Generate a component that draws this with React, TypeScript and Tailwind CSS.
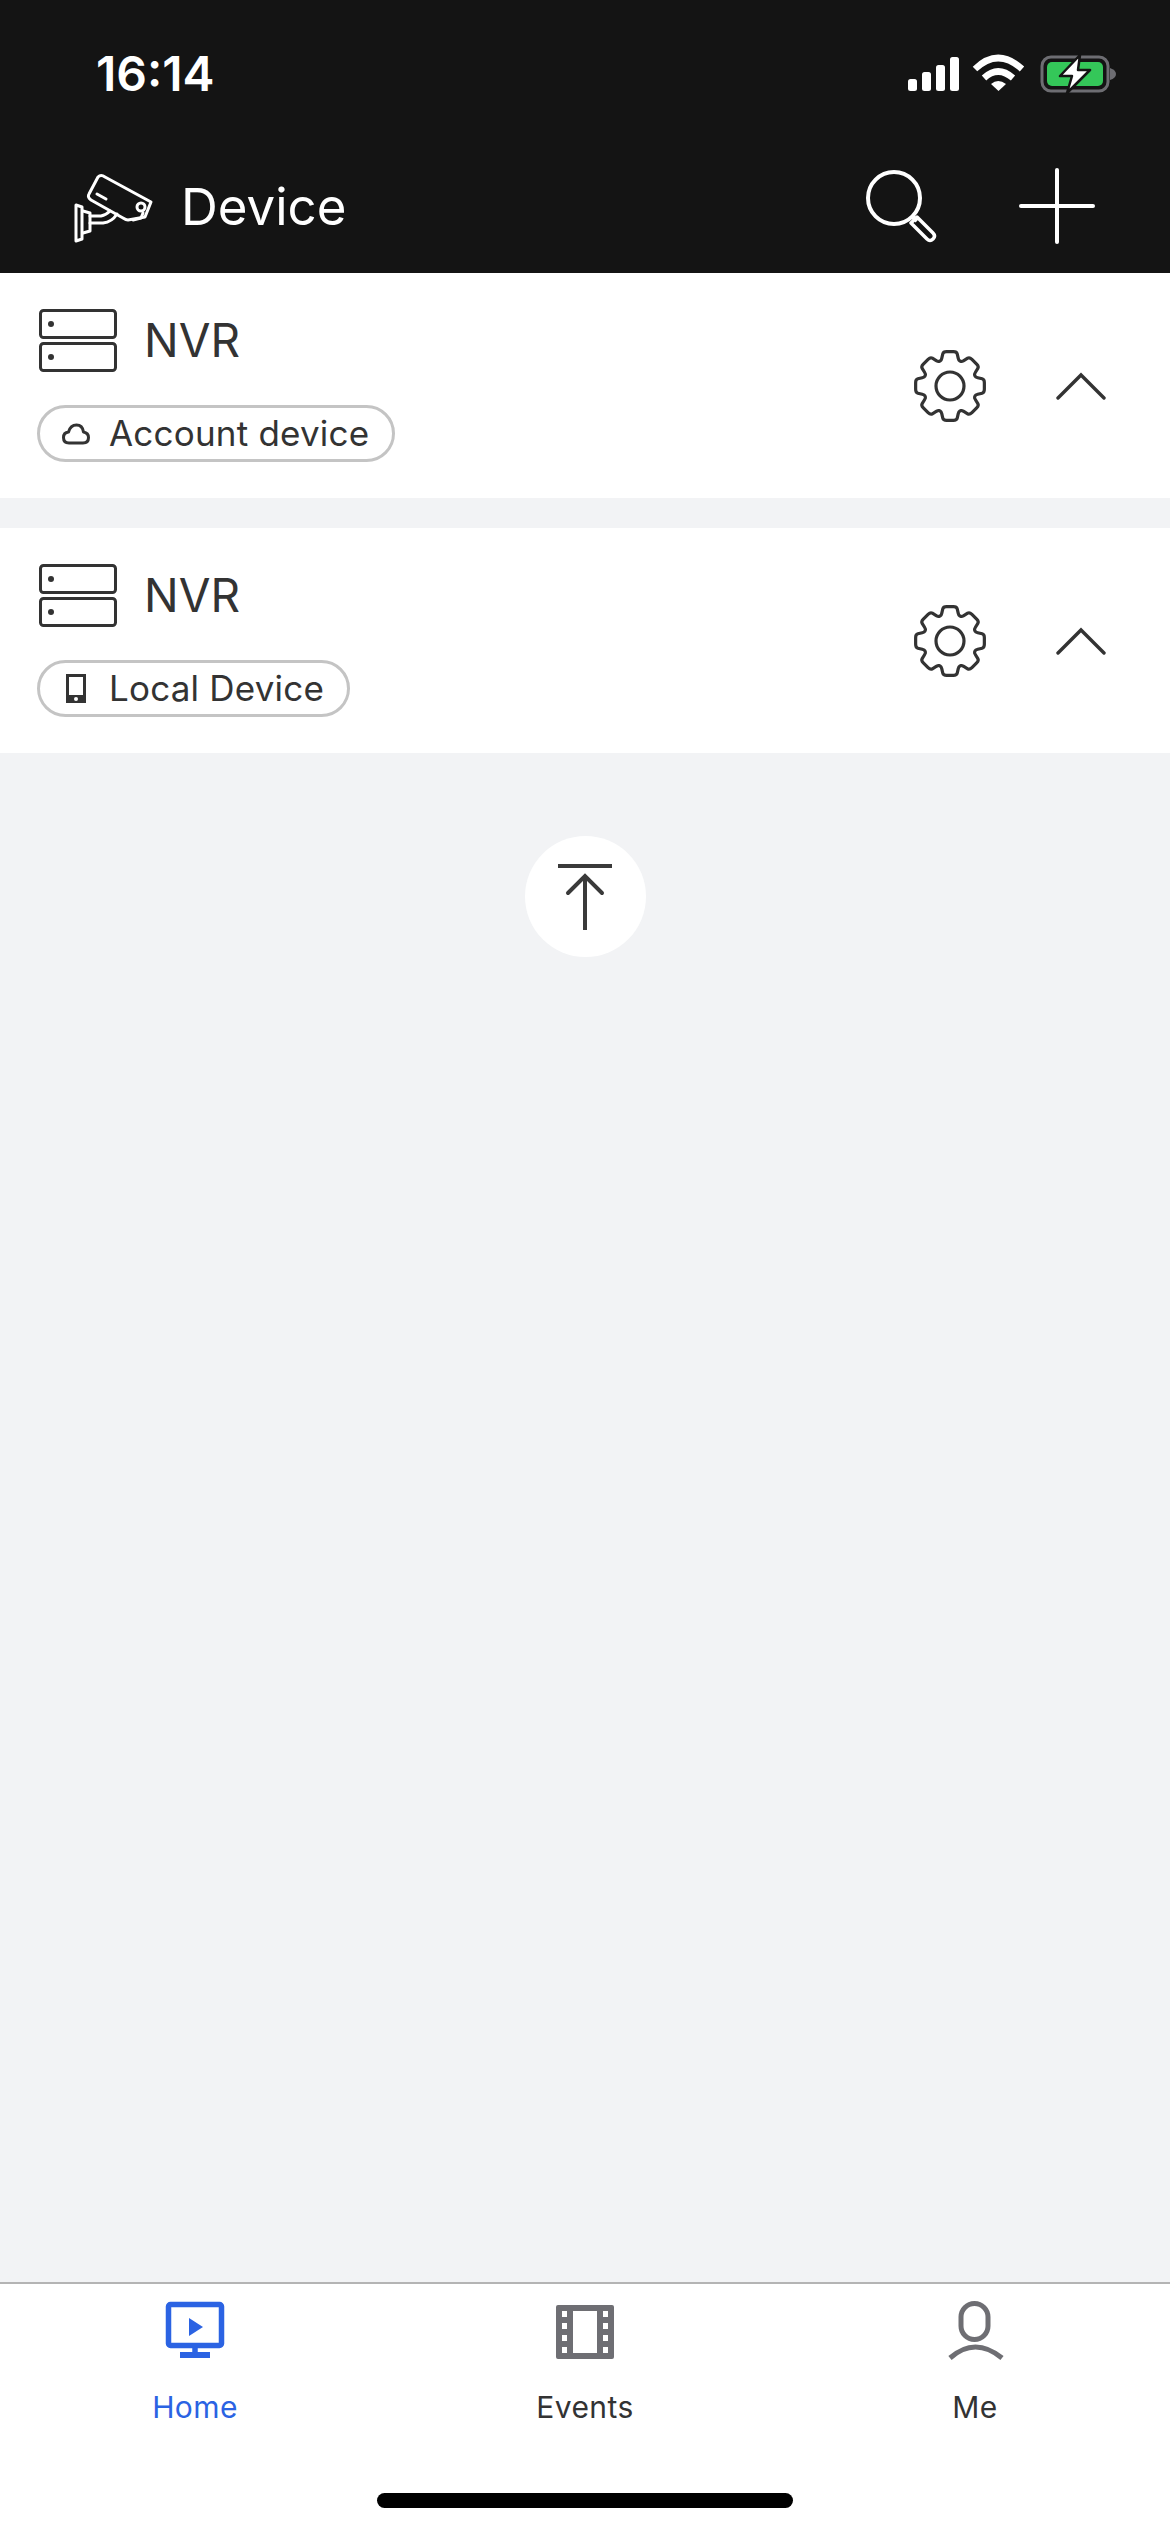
const gearPath = (() => {
  const pts: [number, number][] = [];
  for (let i = 0; i < 8; i++) {
    const a = (i * Math.PI) / 4 - Math.PI / 2;
    const d = Math.PI / 180;
    [[27, -19], [35, -11], [35, 11], [27, 19]].forEach(([r, o]) => {
      pts.push([40 + r * Math.cos(a + o * d), 40 + r * Math.sin(a + o * d)]);
    });
  }
  const mix = (p: number[], q: number[], t: number) => `${(p[0] + (q[0] - p[0]) * t).toFixed(2)} ${(p[1] + (q[1] - p[1]) * t).toFixed(2)}`;
  let d = "";
  pts.forEach((p, i) => {
    const prev = pts[(i + pts.length - 1) % pts.length];
    const next = pts[(i + 1) % pts.length];
    d += `${i === 0 ? "M" : "L"}${mix(p, prev, 0.25)} Q${p[0].toFixed(2)} ${p[1].toFixed(2)} ${mix(p, next, 0.25)} `;
  });
  return d + "Z";
})();

function StatusIcons() {
  return (
    <svg width="210" height="40" viewBox="0 0 210 40" fill="none">
      <rect x="0" y="25" width="9" height="12" rx="2.5" fill="#fff" />
      <rect x="14" y="18" width="9" height="19" rx="2.5" fill="#fff" />
      <rect x="28" y="11" width="9" height="26" rx="2.5" fill="#fff" />
      <rect x="42" y="3" width="9" height="34" rx="2.5" fill="#fff" />
      <path d="M67 15 Q90 -7 114 15" stroke="#fff" strokeWidth="6.5" />
      <path d="M76 24 Q90 11 105 24" stroke="#fff" strokeWidth="6.5" />
      <path d="M83 30 Q90 24 98 30 L90.5 37 Z" fill="#fff" />
      <rect x="134" y="3" width="66" height="34" rx="9" stroke="#6d6d72" strokeWidth="3" />
      <rect x="139" y="8" width="56" height="24" rx="5" fill="#34c759" />
      <path d="M202 14 Q208 16 208 20 Q208 24 202 26 Z" fill="#6d6d72" />
      <path d="M172 1 L152 22 L164 22 L159 39 L182 16 L170 16 Z" fill="#fff" stroke="#141414" strokeWidth="2.5" strokeLinejoin="round" />
    </svg>
  );
}

function CameraIcon() {
  return (
    <svg width="110" height="90" viewBox="0 0 110 90" fill="none" stroke="#fff" strokeWidth="3" strokeLinejoin="round" strokeLinecap="round">
      <path d="M38 16 Q41 13 45 16 L91 41 L85 56 L68 59 Q66 59 63 57 L31 39 Q27 36 29 33 Z" />
      <circle cx="81" cy="46" r="4" />
      <path d="M37 33 L46 38" />
      <path d="M73 59 L81 57 L83 52" />
      <path d="M16 44 L22 46 L22 78 L16 80 Z" />
      <path d="M23 50 L30 52 L30 70 L23 72" />
      <path d="M30 55 L41 55 Q46 54 50 50" />
      <path d="M30 62 L43 62 Q52 61 57 53" />
    </svg>
  );
}

function ServerIcon() {
  return (
    <svg width="78" height="63" viewBox="0 0 78 63" fill="none" className="shrink-0">
      <rect x="1.5" y="1.5" width="75" height="27" rx="3" stroke="#333" strokeWidth="3" />
      <rect x="1.5" y="34.5" width="75" height="27" rx="3" stroke="#333" strokeWidth="3" />
      <circle cx="12" cy="15" r="3" fill="#333" />
      <circle cx="12" cy="48" r="3" fill="#333" />
    </svg>
  );
}

function CloudIcon() {
  return (
    <svg width="28" height="22" viewBox="0 0 28 22" fill="none">
      <path d="M7 20 Q1.5 20 1.5 14.5 Q1.5 9.5 6.5 9 Q8.5 2 14.5 2 Q20.5 2 21.5 9 Q26.5 10 26.5 14.5 Q26.5 20 21 20 Z" stroke="#333" strokeWidth="3" strokeLinejoin="round" />
    </svg>
  );
}

function PhoneIcon() {
  return (
    <svg width="20" height="29" viewBox="0 0 20 29" fill="none">
      <rect x="1.5" y="1.5" width="17" height="26" stroke="#333" strokeWidth="3" />
      <path d="M0 21 H20 V29 H0 Z" fill="#333" />
      <circle cx="10" cy="25" r="2" fill="#fff" />
    </svg>
  );
}

function DeviceRow({ label, icon }: { label: string; icon: React.ReactNode }) {
  return (
    <div className="bg-white h-[225px] flex items-center justify-between pl-[37px] pr-[64px]">
      <div className="flex flex-col">
        <div className="flex items-center gap-[27px] pl-[2px]">
          <ServerIcon />
          <span className="text-[46px] leading-[63px] text-[#333]">NVR</span>
        </div>
        <div className="mt-[33px] h-[57px] self-start flex items-center border-[3px] border-[#c4c4c4] rounded-full pl-[22px] pr-[23px]">
          <span className="w-[28px] mr-[19px] flex justify-center">{icon}</span>
          <span className="text-[35px] leading-none tracking-[0.2px] text-[#333]">{label}</span>
        </div>
      </div>
      <div className="flex items-center gap-[66px]">
        <svg width="80" height="80" viewBox="0 0 80 80" fill="none">
          <path d={gearPath} stroke="#333" strokeWidth="3.2" />
          <circle cx="40" cy="40" r="14" stroke="#333" strokeWidth="3.2" />
        </svg>
        <svg width="50" height="30" viewBox="0 0 50 30" fill="none">
          <path d="M2 27 L25 4 L48 27" stroke="#333" strokeWidth="3.4" strokeLinecap="round" />
        </svg>
      </div>
    </div>
  );
}

export default function App() {
  return (
    <div className="w-[1170px] h-[2532px] bg-[#f2f3f5] flex flex-col font-['Inter',sans-serif]">
      <header className="bg-[#141414] h-[273px] shrink-0 text-white">
        <div className="h-[150px] flex items-center justify-between pl-[96px] pr-[52px] pb-[2px]">
          <span className="text-[48px] font-semibold leading-none">16:14</span>
          <StatusIcons />
        </div>
        <div className="flex items-center justify-between pl-[60px] pr-[75px] mt-[11px]">
          <div className="flex items-center gap-[11px]">
            <CameraIcon />
            <span className="text-[51px] leading-none">Device</span>
          </div>
          <div className="flex items-center gap-[79px]">
            <svg width="76" height="76" viewBox="0 0 76 76" fill="none" stroke="#fff" strokeWidth="4">
              <circle cx="30" cy="30" r="26" />
              <path d="M49 49 L53 53" />
              <path d="M53 49 L69 65 Q72 68 69 71 Q66 74 63 71 L47 55 Z" strokeWidth="3.5" strokeLinejoin="round" />
            </svg>
            <svg width="76" height="76" viewBox="0 0 76 76" fill="none" stroke="#fff" strokeWidth="4" strokeLinecap="round">
              <path d="M38 2 V74" />
              <path d="M2 38 H74" />
            </svg>
          </div>
        </div>
      </header>

      <DeviceRow label="Account device" icon={<CloudIcon />} />
      <div className="h-[30px] shrink-0" />
      <DeviceRow label="Local Device" icon={<PhoneIcon />} />

      <div className="flex-1 flex justify-center pt-[83px]">
        <div className="w-[121px] h-[121px] rounded-full bg-white flex items-center justify-center">
          <svg width="56" height="68" viewBox="0 0 56 68" fill="none" stroke="#3a3a3a" strokeWidth="4" className="mt-[2px]">
            <path d="M1 2 H55" />
            <path d="M28 12 V66" />
            <path d="M11 29 L28 12 L45 29" strokeLinecap="round" />
          </svg>
        </div>
      </div>

      <nav className="h-[250px] shrink-0 bg-white border-t-2 border-[#b4b4b4] flex flex-col">
        <div className="grid grid-cols-3 pt-[17px]">
          <div className="flex flex-col items-center">
            <svg width="60" height="60" viewBox="0 0 60 60" fill="none">
              <rect x="3.5" y="3.5" width="53" height="41" rx="2" stroke="#2b63e3" strokeWidth="5.5" />
              <path d="M24 17 L38 26 L24 35 Z" fill="#2b63e3" />
              <path d="M30 46 V53" stroke="#2b63e3" strokeWidth="5.5" />
              <path d="M15 51 H45 V57 H15 Z" fill="#2b63e3" />
            </svg>
            <span className="mt-[31px] text-[30px] leading-none tracking-[0.4px] text-[#2b63e3]">Home</span>
          </div>
          <div className="flex flex-col items-center">
            <svg width="60" height="60" viewBox="0 0 60 60" fill="none">
              <path fillRule="evenodd" clipRule="evenodd" fill="#6e6e73" d="M3 4 H57 Q59 4 59 6 V56 Q59 58 57 58 H3 Q1 58 1 56 V6 Q1 4 3 4 Z M18 10 V52 H42 V10 Z M7 10 V16 H12 V10 Z M48 10 V16 H53 V10 Z M7 22 V28 H12 V22 Z M48 22 V28 H53 V22 Z M7 34 V40 H12 V34 Z M48 34 V40 H53 V34 Z M7 46 V52 H12 V46 Z M48 46 V52 H53 V46 Z" />
            </svg>
            <span className="mt-[31px] text-[30px] leading-none tracking-[0.4px] text-[#333]">Events</span>
          </div>
          <div className="flex flex-col items-center">
            <svg width="60" height="60" viewBox="0 0 60 60" fill="none" stroke="#6e6e73" strokeWidth="5">
              <rect x="16" y="2.5" width="27" height="36" rx="13.5" />
              <path d="M5 57 Q30 35 57 57" />
            </svg>
            <span className="mt-[31px] text-[30px] leading-none tracking-[0.4px] text-[#333]">Me</span>
          </div>
        </div>
        <div className="mt-auto mb-[24px] self-center w-[416px] h-[15px] rounded-full bg-black" />
      </nav>
    </div>
  );
}
